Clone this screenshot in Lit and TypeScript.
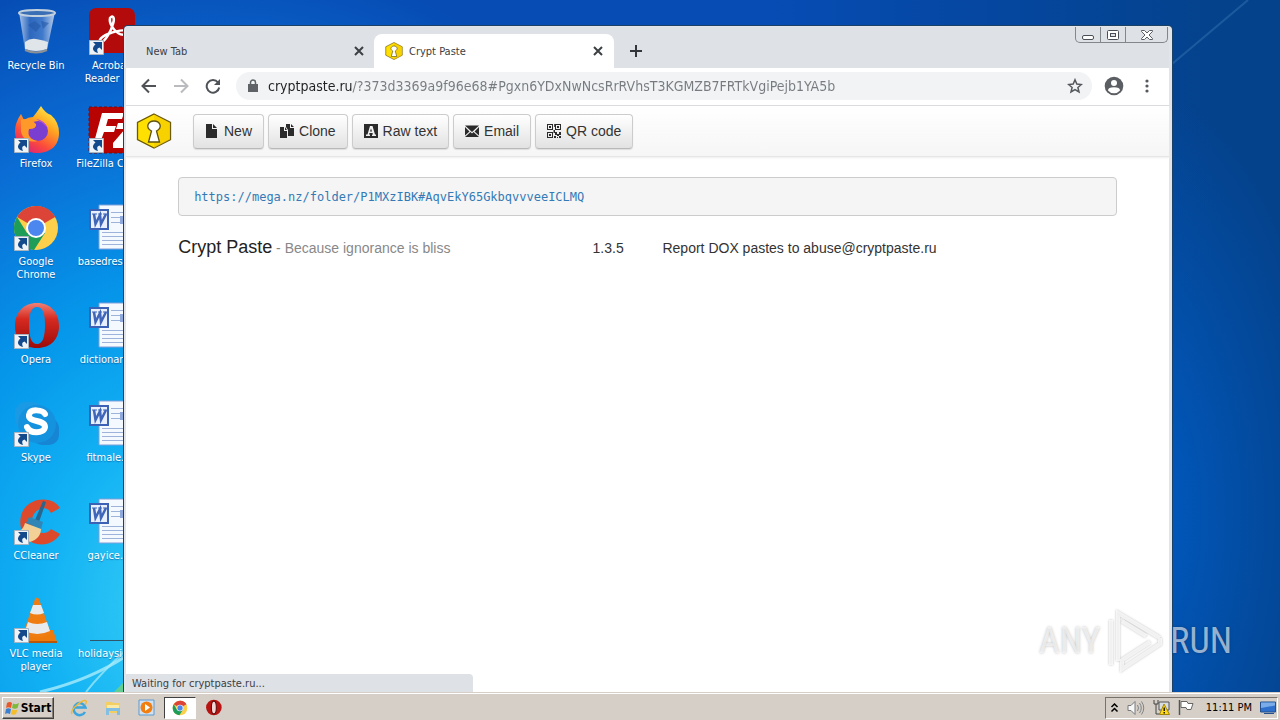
import { LitElement, html, css, svg, TemplateResult } from "lit";
import { customElement, property } from "lit/decorators.js";

const wordDoc = svg`
  <path d="M12 1h36v44H12z" fill="#f4f8ff"/>
  <path d="M12 1h36M12 45h36M12 1v44" stroke="#7f9fd8" fill="none"/>
  <path d="M24 8.500h24M24 13.500h24M24 18.500h24M15 28.500h33M15 32.500h33M15 36.500h33M15 40.500h33" stroke="#9db3da"/>
  <path d="M33 12h15v8H33z" fill="#8fa9dc"/>
  <rect x="3" y="6" width="18" height="19" fill="#e8effd" stroke="#3c62b5" stroke-width="2"/>
  <path d="M7 10l1.500 10L13 11l1 9 5-10" fill="none" stroke="#3f66b8" stroke-width="2.500"/>
  <path d="M5 10h5M11 10h4M16 10h4" stroke="#3f66b8"/>`;

const chromeLogo = svg`
  <circle cx="24" cy="24" r="22" fill="#fcd04b"/>
  <path d="M24 24L5 13A22 22 0 0 1 43.100 13z" fill="#dc4437"/>
  <path d="M24 2a22 22 0 0 1 19.100 11H24z" fill="#dc4437"/>
  <path d="M5 13A22 22 0 0 0 22 46L33 29 24 24 15 29z" fill="#1d9d58"/>
  <circle cx="24" cy="24" r="10" fill="#fff"/>
  <circle cx="24" cy="24" r="8" fill="#4b87ee"/>`;

const operaLogo = (id: string) => svg`
  <defs><linearGradient id=${id} x1="0" y1="0" x2="0" y2="1">
    <stop offset="0" stop-color="#ef8075"/><stop offset=".35" stop-color="#d62a20"/><stop offset="1" stop-color="#9b0c0b"/>
  </linearGradient></defs>
  <path fill-rule="evenodd" fill="url(#${id})" d="M25 1C11 1 3 11 3 24s8 22 22 22 22-9 22-22S39 1 25 1zM25 5c6 0 8 7 8 18s-2 19-8 19-8-8-8-19 2-18 8-18z"/>`;

const art: Record<string, TemplateResult> = {
  bin: svg`
    <defs><linearGradient id="glass" x1="0" x2="1" y1="0" y2="0">
      <stop offset="0" stop-color="#a9c3e8"/><stop offset=".3" stop-color="#2e68bd"/><stop offset=".65" stop-color="#3f79cb"/><stop offset="1" stop-color="#b9cde9"/>
    </linearGradient></defs>
    <path d="M7 4l6 38q11 5 22 0l8-38z" fill="url(#glass)"/>
    <path d="M13 34q5-4 11-3t12 3l-1 7q-11 4-22 0z" fill="#dfe5e8"/>
    <ellipse cx="25" cy="5" rx="18" ry="3" fill="#3a6fb5" stroke="#c3d0de" stroke-width="2"/>
    <path d="M16 17l7-4 6 5-5 6zM29 13l8 2-6 6z" fill="#2458a8" opacity=".6"/>
    <path d="M13 42q11 5 22 0" fill="none" stroke="#8b9097" stroke-width="2"/>`,
  acrobat: svg`
    <rect x="2" y="0" width="46" height="45" rx="7" fill="#b30b0b"/>
    <path d="M23 10c3-4 5 0 3 6-2 7-7 16-11 18-5 1-2-5 6-8s17-5 19-2-5 4-9 1c-6-4-9-11-8-15z" fill="none" stroke="#fff" stroke-width="2.500"/>`,
  firefox: svg`
    <defs><linearGradient id="fox" x1=".8" y1="0" x2=".2" y2="1">
      <stop offset="0" stop-color="#fff04a"/><stop offset=".35" stop-color="#ffa621"/><stop offset=".7" stop-color="#fb4a3c"/><stop offset="1" stop-color="#d61d80"/>
    </linearGradient></defs>
    <path d="M29 0q4 7 10 9 8 7 8 18c0 13-9 20-22 20S3 38 3 25c0-6 2-11 6-17l3 6q4-3 9-3 4-5 8-11z" fill="url(#fox)"/>
    <circle cx="26" cy="25" r="10" fill="#7a3fd0"/>
    <path d="M9 14q8-3 15 4 1 5-7 5-3 10 9 12-14 3-17-9z" fill="#ff9a2a"/>
    <path d="M24 13q9 1 12 10-3-5-12-10z" fill="#b650d8"/>`,
  filezilla: svg`
    <rect x="2" y="1" width="46" height="46" fill="#b80303" stroke="#7b0d0d" stroke-dasharray="3 2"/>
    <path d="M15 7h22l-2 6H21l-2 7h10l-2 6H17l-5 14H6zM31 17h17v5L36 36h12v6H26v-5l12-14h-9z" fill="#fff"/>`,
  chrome: chromeLogo,
  opera: operaLogo("redRing"),
  skype: svg`
    <rect x="3" y="2" width="28" height="28" rx="11" fill="#1a9ae4"/><rect x="20" y="18" width="27" height="27" rx="10" fill="#1585d4"/>
    <circle cx="25" cy="24" r="19" fill="#1592de"/>
    <path d="M33 14c-2-4-15-6-16 1-1 8 16 4 16 12-1 7-15 7-18 0" fill="none" stroke="#fff" stroke-width="6" stroke-linecap="round"/>`,
  ccleaner: svg`
    <path d="M48 10C41-2 20-1 12 11s-3 32 13 35c10 2 19-3 23-10l-9-5c-4 6-13 5-17-1s-2-16 6-19c5-2 9 0 11 4z" fill="#dc4a2b"/>
    <path d="M31 3l3 1-7 20-4-2z" fill="#26668f"/>
    <path d="M17 19l14 5-2 7-15-6z" fill="#3286b5"/>
    <path d="M13 25l16 6c0 6-4 11-11 13L6 34c4-2 6-5 7-9z" fill="#f3d196"/>`,
  vlc: svg`
    <path d="M10 34h31l4 12H4z" fill="#ee7a0c"/>
    <path d="M23 3q2-3 4 0l12 35q-14 7-28 0z" fill="#f07d12"/>
    <path d="M21 9h8l3 8q-7 3-14 0zM16 26q9 4 19 0l3 9q-13 6-25 0z" fill="#e9eaec"/>
    <path d="M4 46h41" stroke="#b9560a" stroke-width="2"/>`,
  word: wordDoc,
  line: svg`<path d="M3 44.500h45" stroke="#2f566a"/>`,
};

@customElement("desktop-icon")
class DesktopIcon extends LitElement {
  @property() kind = "word";
  @property() label = "";
  @property({ type: Boolean }) shortcut = false;
  static styles = css`
    :host { display: block; height: 98px; }
    button { all: unset; display: flex; flex-direction: column; align-items: center; gap: 3px; width: 72px; }
    .pic { position: relative; width: 48px; height: 48px; }
    svg { display: block; }
    .arrow { position: absolute; left: 2px; bottom: 1px; }
    .name { color: #fff; font-size: 11px; line-height: 13px; text-align: center; white-space: pre; text-shadow: 0 1px 1px #0a3c7a80; }
  `;
  render() {
    return html`<button>
      <span class="pic">
        <svg width="48" height="48" viewBox="0 0 48 48">${art[this.kind]}</svg>
        ${this.shortcut
          ? html`<svg class="arrow" width="15" height="15" viewBox="0 0 15 15">
              <path d="M.5.5h14v14H.5z" fill="#eef3f8" stroke="#a9b4bf" />
              <path d="M4 2h9v8l-2.500-2.500C8 8 7.500 10 9 13 4 12 2 8 6.500 4.500z" fill="#124a8c" />
            </svg>`
          : ""}
      </span>
      <span class="name">${this.label}</span>
    </button>`;
  }
}

const hexLogo = (size: number) => html`<svg width=${size} height=${size} viewBox="0 0 36 36">
  <path d="M18 1l16.500 8.500v17L18 35 1.500 26.500v-17z" fill="#ffe000" stroke="#6b5a08" stroke-width="1.300" />
  <path d="M18 1.500l16 8.500v16.500L18 35z" fill="#f2c500" opacity=".55" />
  <path d="M15.500 18c-7-4-3-10 2.500-10s9.500 6 2.500 10l3 11h-11z" fill="#fff" stroke="#5e5212" stroke-width="1.300" />
</svg>`;

const glyph: Record<string, TemplateResult> = {
  file: svg`<path d="M1 0h6v5h5v9H1zM8 0l4 4H8z"/>`,
  copy: svg`<path d="M0 3h4v4h3v7H0zM5 3l2 3H5zM6 0h4v4h4v8H8V6L6 3zM11 0l3 3h-3z"/>`,
  font: svg`<path fill-rule="evenodd" d="M0 0h14v14H0zM6 2L3.500 10.500H2V12h4v-1.500H5L5.500 9h3l.5 1.500H8V12h4v-1.500h-1L8.500 2zM7 4.500L8 7.500H6z"/>`,
  mail: svg`<path d="M0 1.500h14L7 8zM0 3l4.500 4.500L0 11.500zM14 3L9.500 7.500l4.500 4zM0 13l5.500-5L7 9.500 8.500 8l5.500 5z"/>`,
  qr: svg`<path fill-rule="evenodd" d="M0 0h6v6H0zM1 1v4h4V1zM8 0h6v6H8zM9 1v4h4V1zM0 8h6v6H0zM1 9v4h4V9zM2 2h2v2H2zM10 2h2v2h-2zM2 10h2v2H2zM7 0h.8v3H7zM8 8h2v2h2V8h2v3h-2v1h-2v-1H8zM7 12h2v2H7zM10 13h1v1h-1zM12 12h2v2h-2zM6.500 6h1.500v3H6.500z"/>`,
};

const closeX = html`<svg width="10" height="10" viewBox="0 0 10 10"><path d="M1 1l8 8M9 1L1 9" stroke="#3c4043" stroke-width="2" /></svg>`;

@customElement("browser-window")
class BrowserWindow extends LitElement {
  static styles = css`
    :host { display: flex; flex-direction: column; box-sizing: border-box; background: #fff; border: solid #e1e5ea; border-width: 1px 3px 0 2px; border-radius: 4px 4px 0 0; box-shadow: 0 0 0 1px #1c4167; font-size: 12px; color: #3c4043; }
    button, a, input { font: inherit; color: inherit; }
    .bare { all: unset; display: grid; place-items: center; }
    svg { display: block; }
    .strip { display: flex; height: 41px; background: #dee1e6; position: relative; flex: none; }
    .tab { display: flex; align-items: center; gap: 6px; width: 240px; height: 34px; margin-top: 7px; box-sizing: border-box; padding: 0 11px; font-size: 11px; }
    .tab .title { flex: 1; }
    .idle { width: 248px; padding-left: 20px; padding-right: 10px; }
    .active { background: #fff; border-radius: 8px 8px 0 0; }
    .plus { width: 44px; padding-top: 7px; }
    .caption { position: absolute; right: 1px; top: 0; display: flex; border: 1px solid #82868d; border-top: 0; border-radius: 0 0 5px 5px; }
    .caption button { all: unset; width: 24px; height: 15px; display: grid; place-items: center; }
    .caption button + button { border-left: 1px solid #82868d; }
    .caption button:last-child { width: 41px; }
    .bar { display: flex; align-items: center; height: 36px; flex: none; border-bottom: 1px solid #d8dadd; padding: 0 12px 1px 15px; }
    .nav { display: flex; gap: 16px; }
    .omni { flex: 1; display: flex; align-items: center; height: 28px; box-sizing: border-box; border-radius: 14px; background: #f1f3f4; margin: 0 12px 0 15px; padding: 0 9px 0 12px; gap: 10px; }
    .omni input { flex: 1; min-width: 0; border: 0; padding: 0; outline: 0; font-size: 14px; line-height: 20px; height: 20px; color: transparent; background: linear-gradient(90deg, #202124 84px, #777b80 84px); background-clip: text; -webkit-background-clip: text; }
    .menu { margin-left: 13px; width: 20px; }
    .tools { display: flex; align-items: center; gap: 4px; height: 50px; flex: none; padding-left: 10px; background: linear-gradient(#fff, #f6f6f6); border-bottom: 1px solid #e6e6e6; box-shadow: 0 1px 2px #eee; font-family: "Liberation Sans", Arial, sans-serif; }
    .brand { margin-right: 17px; }
    .btn { display: flex; align-items: center; gap: 5px; height: 35px; padding: 0 11px; font-size: 14px; color: #333; border: 1px solid #ccc; border-bottom-color: #b8b8b8; border-radius: 4px; background: linear-gradient(#fff, #e2e2e2); box-shadow: 0 1px 1px #ddd; }
    .page { flex: 1; padding: 20px 5% 0; font-family: "Liberation Sans", Arial, sans-serif; font-size: 14px; color: #333; }
    pre { margin: 0; box-sizing: border-box; height: 39px; padding: 9px 15px; border: 1px solid #ccc; border-radius: 4px; background: #f5f5f5; font: 12px/20px "DejaVu Sans Mono", monospace; }
    pre a { color: #337ab7; text-decoration: none; }
    .foot { display: grid; grid-template-columns: 83fr 14fr 91fr; align-items: baseline; margin-top: 20px; line-height: 22px; white-space: nowrap; }
    .foot b { font-size: 18px; font-weight: 400; color: #222; }
    .foot small { font-size: 14px; color: #888; }
    .status { width: 347px; box-sizing: border-box; height: 18px; padding-left: 6px; background: #dee1e6; border-radius: 0 4px 0 0; font-size: 11px; line-height: 20px; }
  `;
  render() {
    const btn = (g: string, t: string) => html`<button class="btn"><svg width="14" height="14" viewBox="0 0 14 14" fill="#2b2b2b">${glyph[g]}</svg>${t}</button>`;
    return html`
      <div class="strip">
        <div class="tab idle"><span class="title">New Tab</span><button class="bare" aria-label="Close New Tab">${closeX}</button></div>
        <div class="tab active">${hexLogo(18)}<span class="title">Crypt Paste</span><button class="bare" aria-label="Close Crypt Paste">${closeX}</button></div>
        <button class="bare plus" aria-label="New tab"><svg width="12" height="12" viewBox="0 0 12 12"><path d="M6 0v12M0 6h12" stroke="#33363a" stroke-width="2" /></svg></button>
        <div class="caption">
          <button aria-label="Minimize"><svg width="12" height="10" viewBox="0 0 12 10"><rect x=".5" y="5.500" width="11" height="4" rx="1.500" fill="#fff" stroke="#4a4e57" /></svg></button>
          <button aria-label="Maximize"><svg width="12" height="10" viewBox="0 0 12 10"><rect x=".5" y=".5" width="11" height="9" rx="1" fill="#fff" stroke="#4a4e57" /><rect x="3.500" y="3.500" width="5" height="3" fill="#dee1e6" stroke="#4a4e57" /></svg></button>
          <button aria-label="Close"><svg width="12" height="10" viewBox="0 0 12 10"><path d="M.5.5h3L6 3 8.500.5h3v1L8 5l3.500 3.500v1h-3L6 7 3.500 9.500h-3v-1L4 5 .5 1.500z" fill="#fff" stroke="#5a5e67" /></svg></button>
        </div>
      </div>
      <div class="bar">
        <div class="nav">
          <button class="bare" aria-label="Back"><svg width="16" height="16" viewBox="0 0 16 16"><path d="M15 8H2M8 1.500L1.500 8 8 14.500" fill="none" stroke="#4f5357" stroke-width="2" /></svg></button>
          <button class="bare" aria-label="Forward"><svg width="16" height="16" viewBox="0 0 16 16"><path d="M1 8h13M8 1.500L14.500 8 8 14.500" fill="none" stroke="#b9bbbe" stroke-width="2" /></svg></button>
          <button class="bare" aria-label="Reload"><svg width="16" height="16" viewBox="0 0 16 16"><path d="M13 4.500A6.300 6.300 0 1 0 14.200 9.500" fill="none" stroke="#4f5357" stroke-width="2" /><path d="M15 1v6H9z" fill="#4f5357" /></svg></button>
        </div>
        <div class="omni">
          <svg width="10" height="14" viewBox="0 0 10 14"><path d="M0 5h10v8H0z" fill="#5f6368" /><path d="M2.500 5V3.500a2.500 2.500 0 0 1 5 0V5" fill="none" stroke="#5f6368" stroke-width="1.500" /></svg>
          <input aria-label="Address" spellcheck="false" .value=${"cryptpaste.ru/?373d3369a9f96e68#Pgxn6YDxNwNcsRrRVhsT3KGMZB7FRTkVgiPejb1YA5b"} />
          <button class="bare" aria-label="Bookmark"><svg width="16" height="16" viewBox="0 0 16 16"><path d="M8 1.800l1.800 4.300 4.600.4-3.500 3 1.100 4.500L8 11.600 4 14l1.100-4.500-3.500-3 4.600-.4z" fill="none" stroke="#54585d" stroke-width="1.500" /></svg></button>
        </div>
        <button class="bare" aria-label="Profile"><svg width="20" height="20" viewBox="0 0 20 20"><circle cx="10" cy="10" r="9.300" fill="#5b5e62" /><circle cx="10" cy="7" r="3" fill="#fff" /><path d="M4 14.500q0-3.300 6-3.300t6 3.300q-2.200 2.700-6 2.700t-6-2.700z" fill="#fff" /></svg></button>
        <button class="bare menu" aria-label="Menu"><svg width="4" height="14" viewBox="0 0 4 14" fill="#55595e"><circle cx="2" cy="2" r="1.600" /><circle cx="2" cy="7" r="1.600" /><circle cx="2" cy="12" r="1.600" /></svg></button>
      </div>
      <div class="tools">
        <a class="brand" href="#" aria-label="Crypt Paste">${hexLogo(36)}</a>
        ${btn("file", "New")}${btn("copy", "Clone")}${btn("font", "Raw text")}${btn("mail", "Email")}${btn("qr", "QR code")}
      </div>
      <div class="page">
        <pre><a href="#">https://mega.nz/folder/P1MXzIBK#AqvEkY65GkbqvvveeICLMQ</a></pre>
        <div class="foot"><span><b>Crypt Paste</b> <small>- Because ignorance is bliss</small></span><span>1.3.5</span><span>Report DOX pastes to abuse@cryptpaste.ru</span></div>
      </div>
      <div class="status">Waiting for cryptpaste.ru...</div>
    `;
  }
}

@customElement("task-bar")
class TaskBar extends LitElement {
  static styles = css`
    :host { display: flex; align-items: center; height: 28px; box-sizing: border-box; flex: none; background: #d5cfc7; border-top: 1px solid #d5cfc7; box-shadow: inset 0 1px #fff; padding: 2px 2px 0; color: #000; font-size: 11px; position: relative; }
    button { font: inherit; color: inherit; padding: 0; background: none; border: 0; display: grid; place-items: center; height: 22px; }
    svg { display: block; }
    .start { display: flex; align-items: center; gap: 0; width: 52px; justify-content: center; font-weight: 700; font-size: 12px; border: 1px solid; border-color: #fff #404040 #404040 #fff; box-shadow: inset -1px -1px #85807a; }
    .quick { display: flex; margin-left: 8px; gap: 1px; }
    .quick button { width: 33px; }
    .quick .on { width: 32px; background: #fff; border: 1px solid; border-color: #404040 #fff #fff #404040; }
    .tray { display: flex; align-items: center; gap: 8px; margin-left: auto; height: 22px; box-sizing: border-box; padding: 0 1px 0 4px; border: 1px solid; border-color: #77726b #fff #fff #77726b; }
    .clock { margin-left: 4px; }
  `;
  render() {
    return html`
      <button class="start"><svg width="16" height="16" viewBox="0 0 16 16"><path d="M2 3q3-2 5 0L6 8Q3 6.500 1 8z" fill="#e8582b" /><path d="M8 3.500q3 1.500 6-.5l-1.500 5Q10 9.500 7 8z" fill="#7fb93c" /><path d="M1 9q2-1.500 5 0l-1 5q-3-1.500-5 0z" fill="#3b7fd0" /><path d="M7 9.500q3 1.500 5.500 0L11 14q-2.500 1.500-5 0z" fill="#f5bd28" /></svg>Start</button>
      <div class="quick">
        <button aria-label="Internet Explorer"><svg width="18" height="18" viewBox="0 0 18 18"><path d="M15 13a6 6 0 1 1 .5-4.500H5" fill="none" stroke="#3aa5de" stroke-width="2.500" /><path d="M2 15Q0 12 7 6t9-4q1 1-1 4" fill="none" stroke="#efb936" stroke-width="1.500" /></svg></button>
        <button aria-label="Explorer"><svg width="18" height="18" viewBox="0 0 18 18"><path d="M2 3h6l1 1h7v10H2z" fill="#f3cf63" /><path d="M3 6h12v5H3z" fill="#fbeaa5" /><path d="M2 9h14v7h-3v-4H5v4H2z" fill="#83bfe2" /></svg></button>
        <button aria-label="Media Player"><svg width="17" height="17" viewBox="0 0 17 17"><path d="M1 1h15v15H1z" fill="#cfe1f3" stroke="#5b9bd3" /><circle cx="8.500" cy="8.500" r="6" fill="#f07e12" /><path d="M7 5l5 3.500L7 12z" fill="#fff" /></svg></button>
        <button class="on" aria-label="Chrome"><svg width="16" height="16" viewBox="0 0 48 48">${chromeLogo}</svg></button>
        <button aria-label="Opera"><svg width="17" height="17" viewBox="0 0 48 48"><circle cx="25" cy="24" r="22" fill="#b81412" /><path d="M25 6c6 0 7 7 7 18s-2 18-7 18-7-7-7-18 1-18 7-18z" fill="#f3d9d5" stroke="#5c0a08" stroke-width="3" /></svg></button>
      </div>
      <div class="tray">
        <svg width="9" height="10" viewBox="0 0 9 10"><path d="M1.500 4l3-3 3 3M1.500 8.500l3-3 3 3" fill="none" stroke="#000" stroke-width="1.500" /></svg>
        <svg width="18" height="16" viewBox="0 0 18 16"><path d="M1 5.500h3l4-4v13l-4-4H1z" fill="#f7f7f7" stroke="#77797c" /><path d="M10.500 5q2 3 0 6M12.500 3q3.500 5 0 10M14.500 1.500q4.500 6.500 0 13" fill="none" stroke="#808386" /></svg>
        <svg width="17" height="17" viewBox="0 0 17 17"><path d="M6 3h10v8H6zM7 14h8" fill="#d8dde2" stroke="#555" /><path d="M1 1v4h4V1M3 5v10h5" fill="none" stroke="#444" /><path d="M11 5l5.500 10.500h-10z" fill="#ffd91c" stroke="#a38608" /><path d="M11.200 8.500v3.500M11.200 13v1.500" stroke="#000" stroke-width="1.300" /></svg>
        <svg width="16" height="17" viewBox="0 0 16 17"><path d="M1.500 1v15" stroke="#555" stroke-width="1.500" /><path d="M3 2.500h6l1 2h5l-2 6H9l-1-2H3z" fill="#fff" stroke="#666" /></svg>
        <span class="clock">11:11 PM</span>
        <svg width="16" height="14" viewBox="0 0 16 14"><path d="M.5 1h15v10H.5z" fill="#2e70cc" stroke="#25508c" /><path d="M1 1.500h14v3L1 7z" fill="#79ace8" /><path d="M4 12.500h10" stroke="#25508c" /></svg>
      </div>
    `;
  }
}

@customElement("app-root")
class AppRoot extends LitElement {
  static styles = css`
    :host { display: flex; flex-direction: column; height: 100vh; overflow: hidden; font-family: "DejaVu Sans Condensed", "Noto Sans", sans-serif; }
    .desktop {
      position: relative; flex: 1; overflow: hidden;
      background:
        radial-gradient(ellipse 16% 62% at 88% 74%, #005cc4, #005cc400),
        linear-gradient(90deg, transparent 60%, #04428c 95%),
        radial-gradient(ellipse 45% 95% at 16% 88%, #40d4f5 0, #12b2f4 28%, #0596ea 50%, #0a6cd4 75%, #064cb4 100%);
    }
    .rays { position: absolute; inset: 0; width: 100%; height: 100%; }
    .icons { display: grid; grid-template-columns: 72px 72px; column-gap: 3px; padding-top: 8px; position: relative; }
    browser-window { position: absolute; left: 124px; right: 108px; top: 26px; bottom: 0; }
    .mark { position: absolute; right: 48px; bottom: 19px; display: flex; align-items: center; gap: 6px; color: #ffffff99; font: 36px/64px "Roboto Condensed", "Open Sans Condensed", "Liberation Sans", sans-serif; text-shadow: 0 0 3px #0004; }
    .mark svg { filter: drop-shadow(0 0 1px #0005); }
  `;
  render() {
    const rows: [string, string, string, string, boolean][] = [
      ["bin", "Recycle Bin", "acrobat", "Acrobat\nReader DC", true],
      ["firefox", "Firefox", "filezilla", "FileZilla Client", true],
      ["chrome", "Google\nChrome", "word", "basedresea...", false],
      ["opera", "Opera", "word", "dictionary.rtf", false],
      ["skype", "Skype", "word", "fitmale.rtf", false],
      ["ccleaner", "CCleaner", "word", "gayice.rtf", false],
      ["vlc", "VLC media\nplayer", "line", "holidaysing...", false],
    ];
    return html`
      <div class="desktop">
        <svg class="rays" viewBox="0 0 1280 692" preserveAspectRatio="none">
          <path d="M40 692Q90 680 126 656" fill="none" stroke="#a9ecfb" stroke-width="3" opacity=".8" />
          <path d="M86 692Q100 674 126 650" fill="none" stroke="#a9ecfb" stroke-width="2" opacity=".7" />
          <path d="M114 692l12-12v12z" fill="#62cf92" />
          <path d="M1172 64L1248 0" stroke="#4b86bd" stroke-width="2" opacity=".35" />
        </svg>
        <div class="icons">
          ${rows.map(
            (r, i) => html`<desktop-icon kind=${r[0]} label=${r[1]} ?shortcut=${i > 0}></desktop-icon>
              <desktop-icon kind=${r[2]} label=${r[3]} ?shortcut=${r[4]}></desktop-icon>`
          )}
        </div>
        <browser-window></browser-window>
        <div class="mark">
          <span>ANY</span>
          <svg width="58" height="64" viewBox="0 0 58 64" fill="none" stroke="#ffffff" stroke-opacity=".75" stroke-width="4">
            <path d="M5 56V11M12 52V4l42 25M16 12l24 15M54 29v6L16 60V51l28-18" />
          </svg>
          <span>RUN</span>
        </div>
      </div>
      <task-bar></task-bar>
    `;
  }
}
